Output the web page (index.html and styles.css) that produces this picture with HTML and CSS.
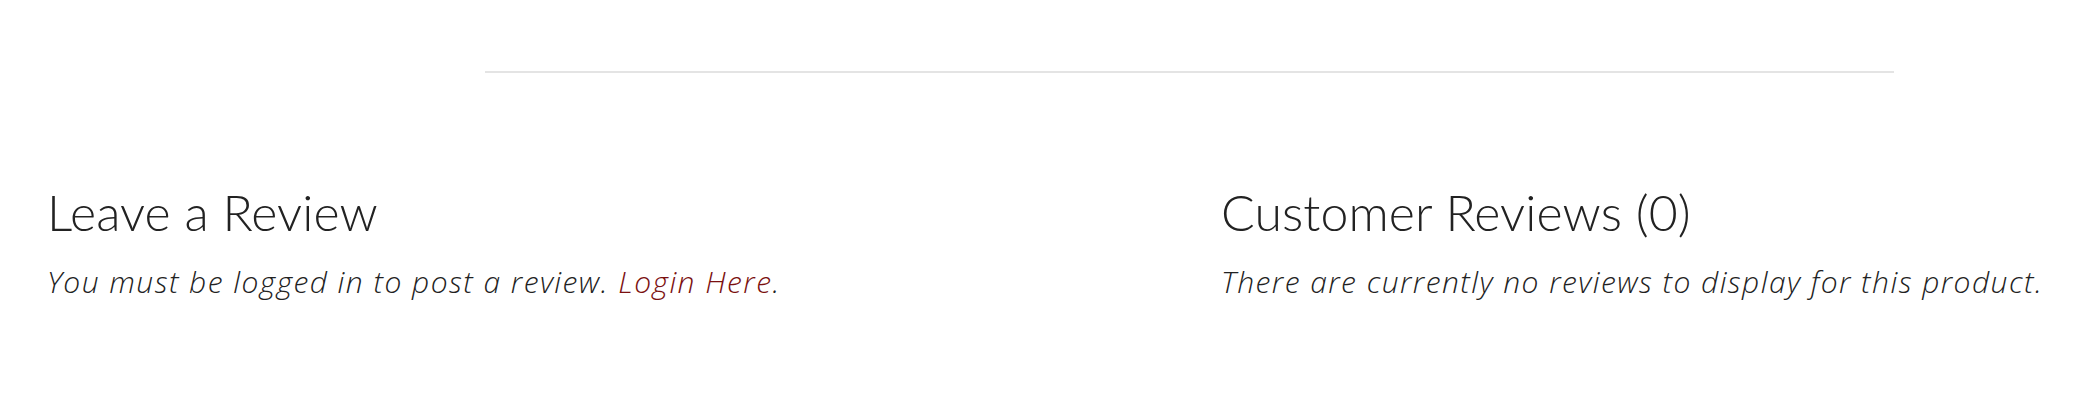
FILE: index.html
```html
<!DOCTYPE html>
<html lang="en">
<head>
<meta charset="utf-8">
<title>Reviews</title>
<link rel="stylesheet" href="styles.css">
</head>
<body>
<div class="page">
  <div class="divider"></div>
  <div class="reviews">
    <section class="col">
      <h2 class="title">Leave a Review</h2>
      <p class="note">You must be logged in to post a review. <a href="#" class="link">Login Here</a>.</p>
    </section>
    <section class="col">
      <h2 class="title">Customer Reviews (0)</h2>
      <p class="note">There are currently no reviews to display for this product.</p>
    </section>
  </div>
</div>
</body>
</html>
```

FILE: styles.css
```css
html, body {
  margin: 0;
  padding: 0;
  background: #ffffff;
}
.page {
  font-family: "Lato", "Liberation Sans", sans-serif;
  font-weight: 300;
  color: #222222;
}
.divider {
  margin: 71px 0 0 485px;
  width: 1409px;
  height: 2px;
  background: #e4e4e4;
}
.reviews {
  display: grid;
  grid-template-columns: 1174px 1fr;
  padding-left: 47px;
  margin-top: 109px;
}
.title {
  margin: 0;
  font-size: 50px;
  font-weight: 300;
  line-height: 60px;
  letter-spacing: 0.1px;
}
.note {
  margin: 22px 0 0 0;
  font-family: "Open Sans", "Lato", sans-serif;
  font-size: 30px;
  font-weight: 300;
  font-style: italic;
  line-height: 36px;
  letter-spacing: 1.45px;
}
.link {
  color: #7b1010;
  text-decoration: none;
}
```
